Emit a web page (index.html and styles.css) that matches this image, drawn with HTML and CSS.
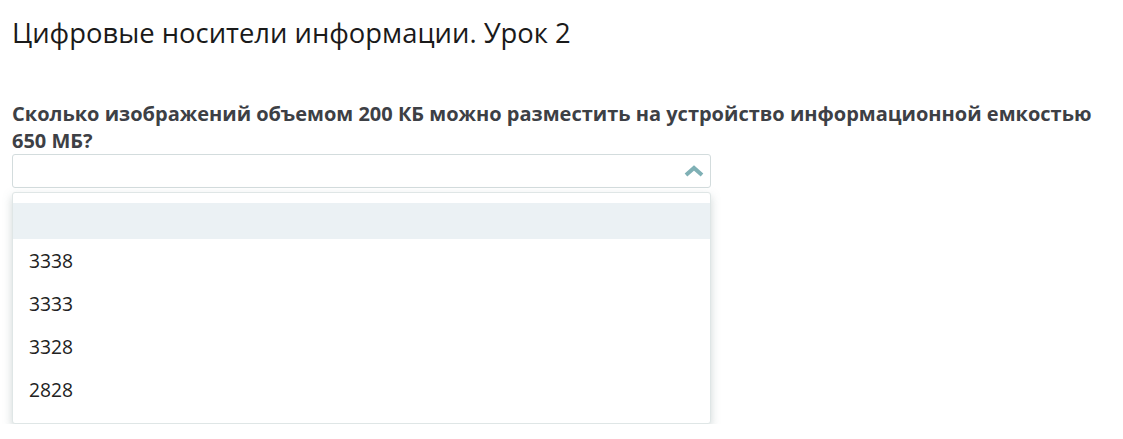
FILE: index.html
```html
<!DOCTYPE html>
<html lang="ru">
<head>
<meta charset="utf-8">
<link rel="stylesheet" href="styles.css">
</head>
<body>
<div class="page">
  <h1 class="title">Цифровые носители информации. Урок 2</h1>
  <div class="question">Сколько изображений объемом 200 КБ можно разместить на устройство информационной емкостью 650 МБ?</div>
  <div class="select">
    <div class="select-box">
      <svg class="chevron" width="20" height="12" viewBox="0 0 20 12"><path d="M2 10 L10 3 L18 10" fill="none" stroke="#7fb0b5" stroke-width="4" stroke-linejoin="miter"/></svg>
    </div>
    <ul class="options">
      <li class="option active">&nbsp;</li>
      <li class="option">3338</li>
      <li class="option">3333</li>
      <li class="option">3328</li>
      <li class="option">2828</li>
    </ul>
  </div>
</div>
</body>
</html>
```
FILE: styles.css
```css
html, body { margin: 0; padding: 0; background: #fff; }
body { font-family: "Open Sans", "Liberation Sans", sans-serif; color: #222; }
.page { padding: 13px 12px 0 12px; }
.title { margin: 0; font-weight: 400; font-size: 27.4px; line-height: 40px; color: #1a1a1a; }
.question { margin-top: 47px; font-weight: 700; font-size: 20px; line-height: 27px; color: #3d4045; max-width: 1095px; }
.select { width: 699px; margin-top: 0; }
.select-box { height: 32px; border: 1px solid #d3dcdd; border-radius: 3px; display: flex; align-items: center; justify-content: flex-end; padding-right: 6px; }
.chevron { display: block; }
.options { list-style: none; margin: 4px 0 0 0; padding: 10px 0 12px 0; border: 1px solid #dfe6e6; border-radius: 3px; box-shadow: 0 4px 10px rgba(120,140,140,0.35); background: #fff; }
.option { height: 43px; line-height: 43px; padding-left: 16px; font-size: 19.3px; color: #222; }
.option.active { height: 36px; line-height: 36px; background: #ebf1f4; }
```
